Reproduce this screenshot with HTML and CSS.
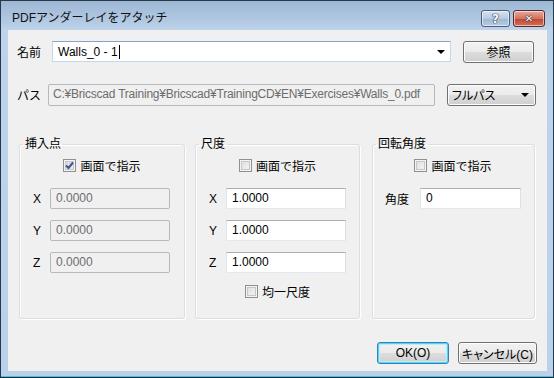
FILE: index.html
```html
<!DOCTYPE html>
<html lang="ja">
<head>
  <meta charset="UTF-8">
  <title>PDFアンダーレイをアタッチ</title>
  <link rel="stylesheet" href="styles.css">
</head>
<body>
  <div class="window">
    <div class="titlebar">
      <span class="title">PDFアンダーレイをアタッチ</span>
      <div class="caption-btns">
        <div class="cap help">?</div>
        <div class="cap close">✕</div>
      </div>
    </div>

    <div class="client">
      <div class="row name-row">
        <span class="lbl name-lbl">名前</span>
        <div class="combo edit-combo">
          <span class="val">Walls_0 - 1<span class="caret"></span></span>
          <span class="arrow"></span>
        </div>
        <div class="btn browse">参照</div>
      </div>

      <div class="row path-row">
        <span class="lbl path-lbl">パス</span>
        <div class="textbox disabled path-box">C:¥Bricscad Training¥Bricscad¥TrainingCD¥EN¥Exercises¥Walls_0.pdf</div>
        <div class="combo list-combo">
          <span class="val narrow">フルパス</span>
          <span class="arrow"></span>
        </div>
      </div>

      <div class="groups">
        <fieldset class="group g-insert">
          <legend>挿入点</legend>
          <div class="group-body">
            <div class="check-row">
              <span class="check checked"><svg width="9" height="9" viewBox="0 0 9 9"><path d="M1 4.5 L3.5 7 L8 1.5" fill="none" stroke="#3d5594" stroke-width="2"/></svg></span>
              <span>画面で指示</span>
            </div>
            <div class="field"><span class="flbl">X</span><div class="textbox disabled num">0.0000</div></div>
            <div class="field"><span class="flbl">Y</span><div class="textbox disabled num">0.0000</div></div>
            <div class="field"><span class="flbl">Z</span><div class="textbox disabled num">0.0000</div></div>
          </div>
        </fieldset>

        <fieldset class="group g-scale">
          <legend>尺度</legend>
          <div class="group-body">
            <div class="check-row">
              <span class="check"></span>
              <span>画面で指示</span>
            </div>
            <div class="field"><span class="flbl">X</span><div class="textbox num">1.0000</div></div>
            <div class="field"><span class="flbl">Y</span><div class="textbox num">1.0000</div></div>
            <div class="field"><span class="flbl">Z</span><div class="textbox num">1.0000</div></div>
            <div class="check-row uniform">
              <span class="check"></span>
              <span>均一尺度</span>
            </div>
          </div>
        </fieldset>

        <fieldset class="group g-rotate">
          <legend>回転角度</legend>
          <div class="group-body">
            <div class="check-row">
              <span class="check"></span>
              <span>画面で指示</span>
            </div>
            <div class="field"><span class="flbl angle-lbl">角度</span><div class="textbox angle">0</div></div>
          </div>
        </fieldset>
      </div>

      <div class="footer">
        <div class="btn default ok">OK(O)</div>
        <div class="btn cancel narrow">キャンセル(C)</div>
      </div>
    </div>
  </div>
</body>
</html>
```

FILE: styles.css
```css
* {
  box-sizing: border-box;
}
body {
  margin: 0;
  font-family: "Liberation Sans", "Noto Sans CJK JP", sans-serif;
  font-size: 12px;
  color: #000;
  background: #fff;
}
.narrow {
  font-feature-settings: "palt";
}
.window {
  width: 554px;
  height: 378px;
  border: 1px solid #26384c;
  border-bottom-color: #1b2a38;
  background: linear-gradient(#9db7d3, #b4cbe4 22px, #bfd4eb 29px, #b9d1ea);
  padding: 0 6px 6px 7px;
  display: flex;
  flex-direction: column;
  box-shadow: inset 0 -1px 0 #43c2e4;
}

/* title bar */
.titlebar {
  height: 29px;
  display: flex;
  justify-content: space-between;
  align-items: flex-start;
  padding: 0 2px 0 4px;
}
.title {
  margin-top: 9px;
  line-height: 16px;
  color: #111;
}
.caption-btns {
  display: flex;
  gap: 3px;
  margin-top: 9px;
}
.cap {
  height: 17px;
  border: 1px solid #4c5e78;
  border-radius: 3px;
  display: flex;
  align-items: center;
  justify-content: center;
  color: #fff;
  font-family: "DejaVu Sans", sans-serif;
  font-weight: bold;
  text-shadow: 0 0 1px #203044, 0 0 1px #203044, 0 0 1px #203044;
  box-shadow: inset 0 0 0 1px rgba(255, 255, 255, 0.55);
}
.help {
  width: 29px;
  font-size: 12px;
  background: linear-gradient(#d5e2f0, #b7cbe1 50%, #9fb7d2 51%, #b5cbe2);
}
.close {
  width: 32px;
  font-size: 10px;
  background: linear-gradient(#e9a99b, #d27361 50%, #c14430 51%, #d36e5a);
  border-color: #5b2a26;
}

/* client area */
.client {
  flex: 1;
  background: #f0f0f0;
  padding: 11px 12px 0 9px;
  display: flex;
  flex-direction: column;
}
.row {
  display: flex;
  align-items: center;
  height: 21px;
}
.lbl {
  flex-shrink: 0;
}
.name-lbl {
  width: 35px;
}
.path-lbl {
  width: 31px;
}
.path-row {
  margin-top: 22px;
  margin-right: -2px;
}

.textbox {
  height: 21px;
  border: 1px solid #abadb3;
  border-color: #abadb3 #dbdfe6 #e3e9ef #e2e3ea;
  background: #fff;
  padding: 0 5px;
  line-height: 19px;
  white-space: nowrap;
  overflow: hidden;
  flex-shrink: 0;
}
.textbox.disabled {
  background: #f0f0f0;
  border-color: #b5b8bc;
  color: #6d6d6d;
  border-radius: 2px;
}
.path-box {
  width: 387px;
  height: 22px;
  padding-left: 4px;
  letter-spacing: -0.22px;
}

.combo {
  height: 21px;
  display: flex;
  align-items: center;
  justify-content: space-between;
  padding: 0 5px;
  flex-shrink: 0;
}
.edit-combo {
  width: 399px;
  background: #fff;
  border: 1px solid #c5d7ea;
  border-top-color: #7fa6cf;
}
.caret {
  display: inline-block;
  width: 1px;
  height: 14px;
  background: #000;
  vertical-align: -3px;
  margin-left: 1px;
}
.list-combo {
  width: 89px;
  height: 22px;
  margin-left: 12px;
  border: 1px solid #707070;
  border-radius: 3px;
  background: linear-gradient(#f2f2f2, #ebebeb 50%, #dddddd 51%, #cfcfcf);
  box-shadow: inset 0 0 0 1px #fcfcfc;
  padding: 0 6px 0 4px;
}
.arrow {
  width: 0;
  height: 0;
  border-left: 4px solid transparent;
  border-right: 4px solid transparent;
  border-top: 4px solid #000;
  margin-top: 1px;
}

.btn {
  height: 22px;
  border: 1px solid #707070;
  border-radius: 3px;
  background: linear-gradient(#f2f2f2, #ebebeb 50%, #dddddd 51%, #cfcfcf);
  box-shadow: inset 0 0 0 1px #fcfcfc;
  display: flex;
  align-items: center;
  justify-content: center;
  flex-shrink: 0;
}
.browse {
  width: 71px;
  margin-left: 12px;
}
.btn.default {
  border-color: #3c7fb1;
  box-shadow: inset 0 0 0 1px #48d8fb, inset 0 0 0 2px #c2ebfa;
}

/* group boxes */
.groups {
  display: flex;
  height: 182px;
  margin-top: 32px;
  padding-left: 2px;
}
.group {
  margin: 0;
  padding: 0;
  border: 1px solid #d5dfe5;
  border-radius: 3px;
  box-shadow: inset 1px 1px 0 #fff, 1px 1px 0 #fff;
  min-width: 0;
}
.group legend {
  margin-left: 3px;
  padding: 0 2px;
  line-height: 14px;
}
.g-insert {
  width: 166px;
}
.g-scale {
  width: 165px;
  margin-left: 10px;
}
.g-rotate {
  width: 163px;
  margin-left: 12px;
}
.group-body {
  padding: 0 0 0 13px;
  display: flex;
  flex-direction: column;
}
.g-rotate .group-body {
  padding-left: 12px;
}
.check-row {
  display: flex;
  align-items: center;
  justify-content: center;
  gap: 4px;
  height: 13px;
  margin-top: 8px;
  margin-left: -13px;
}
.check {
  width: 13px;
  height: 13px;
  border: 1px solid #8e8f8f;
  background: linear-gradient(135deg, #dcdcdc, #f7f7f7);
  box-shadow: inset 0 0 0 1px #f4f4f4, inset 0 0 0 2px #c7c7c7;
  display: flex;
  align-items: center;
  justify-content: center;
}
.check.checked {
  background: linear-gradient(135deg, #d0d0d0, #f4f4f4);
}
.field {
  display: flex;
  align-items: center;
  margin-top: 11px;
}
.check-row + .field {
  margin-top: 16px;
}
.flbl {
  width: 17px;
  flex-shrink: 0;
}
.angle-lbl {
  width: 35px;
}
.num {
  width: 120px;
}
.angle {
  width: 101px;
}
.uniform {
  margin-top: 12px;
}

/* bottom buttons */
.footer {
  display: flex;
  justify-content: flex-end;
  gap: 9px;
  margin-top: 23px;
  margin-right: -2px;
}
.ok {
  width: 72px;
}
.cancel {
  width: 79px;
}
```
